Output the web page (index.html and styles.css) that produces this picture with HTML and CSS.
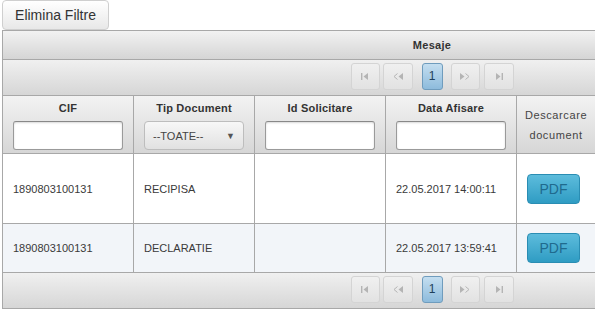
FILE: index.html
```html
<!DOCTYPE html>
<html lang="ro">
<head>
    <meta charset="UTF-8">
    <title>Mesaje</title>
    <link rel="stylesheet" href="styles.css">
</head>
<body>
    <button class="btn-clear">Elimina Filtre</button>
    <div class="panel">
        <div class="panel-header">Mesaje</div>
        <div class="pager">
            <button class="pg-btn pg-first" disabled>
                <svg width="8" height="7" viewBox="0 0 8 7"><rect x="0" y="0" width="1.4" height="7" fill="#b4b4b4"/><path d="M7 0 L2.5 3.5 L7 7 Z" fill="#b4b4b4"/></svg>
            </button>
            <button class="pg-btn pg-prev" disabled>
                <svg width="10" height="7" viewBox="0 0 10 7"><path d="M4.5 0.5 L1 3.5 L4.5 6.5" fill="none" stroke="#b4b4b4" stroke-width="1"/><path d="M10 0 L5.5 3.5 L10 7 Z" fill="#b4b4b4"/></svg>
            </button>
            <button class="pg-page">1</button>
            <button class="pg-btn pg-next" disabled>
                <svg width="10" height="7" viewBox="0 0 10 7"><path d="M0 0 L4.5 3.5 L0 7 Z" fill="#b4b4b4"/><path d="M5.5 0.5 L9 3.5 L5.5 6.5" fill="none" stroke="#b4b4b4" stroke-width="1"/></svg>
            </button>
            <button class="pg-btn pg-last" disabled>
                <svg width="8" height="7" viewBox="0 0 8 7"><path d="M1 0 L5.5 3.5 L1 7 Z" fill="#b4b4b4"/><rect x="6.6" y="0" width="1.4" height="7" fill="#b4b4b4"/></svg>
            </button>
        </div>
        <table class="grid">
            <thead>
                <tr>
                    <th class="c1"><div class="th-title">CIF</div><input class="filter" type="text"></th>
                    <th class="c2"><div class="th-title">Tip Document</div>
                        <div class="select"><span>--TOATE--</span><span class="arrow">&#9660;</span></div>
                    </th>
                    <th class="c3"><div class="th-title">Id Solicitare</div><input class="filter" type="text"></th>
                    <th class="c4"><div class="th-title">Data Afisare</div><input class="filter" type="text"></th>
                    <th class="c5 th-wrap">Descarcare document</th>
                    <th class="c6"></th>
                </tr>
            </thead>
            <tbody>
                <tr class="row-tall">
                    <td>1890803100131</td>
                    <td>RECIPISA</td>
                    <td></td>
                    <td>22.05.2017 14:00:11</td>
                    <td><button class="btn-pdf">PDF</button></td>
                    <td></td>
                </tr>
                <tr class="row-alt">
                    <td>1890803100131</td>
                    <td>DECLARATIE</td>
                    <td></td>
                    <td>22.05.2017 13:59:41</td>
                    <td><button class="btn-pdf">PDF</button></td>
                    <td></td>
                </tr>
            </tbody>
        </table>
        <div class="pager pager-bottom">
            <button class="pg-btn pg-first" disabled>
                <svg width="8" height="7" viewBox="0 0 8 7"><rect x="0" y="0" width="1.4" height="7" fill="#b4b4b4"/><path d="M7 0 L2.5 3.5 L7 7 Z" fill="#b4b4b4"/></svg>
            </button>
            <button class="pg-btn pg-prev" disabled>
                <svg width="10" height="7" viewBox="0 0 10 7"><path d="M4.5 0.5 L1 3.5 L4.5 6.5" fill="none" stroke="#b4b4b4" stroke-width="1"/><path d="M10 0 L5.5 3.5 L10 7 Z" fill="#b4b4b4"/></svg>
            </button>
            <button class="pg-page">1</button>
            <button class="pg-btn pg-next" disabled>
                <svg width="10" height="7" viewBox="0 0 10 7"><path d="M0 0 L4.5 3.5 L0 7 Z" fill="#b4b4b4"/><path d="M5.5 0.5 L9 3.5 L5.5 6.5" fill="none" stroke="#b4b4b4" stroke-width="1"/></svg>
            </button>
            <button class="pg-btn pg-last" disabled>
                <svg width="8" height="7" viewBox="0 0 8 7"><path d="M1 0 L5.5 3.5 L1 7 Z" fill="#b4b4b4"/><rect x="6.6" y="0" width="1.4" height="7" fill="#b4b4b4"/></svg>
            </button>
        </div>
    </div>
</body>
</html>
```

FILE: styles.css
```css
* {
    margin: 0;
    padding: 0;
    box-sizing: border-box;
}
body {
    font-family: 'Liberation Sans', Arial, sans-serif;
    background: #fff;
    color: #333;
    padding-left: 2px;
    overflow: hidden;
}
button {
    font-family: inherit;
}
.btn-clear {
    display: block;
    height: 30px;
    width: 107px;
    font-size: 14px;
    color: #333;
    background: linear-gradient(#ffffff, #e8e8e8);
    border: 1px solid #cfcfcf;
    border-radius: 4px;
}
.panel {
    width: 860px;
    border: 1px solid #a8a8a8;
}
.panel-header {
    height: 29px;
    line-height: 28px;
    text-align: center;
    font-size: 11px;
    font-weight: bold;
    letter-spacing: 0.3px;
    color: #333;
    background: linear-gradient(#f2f2f2, #d5d5d5);
    border-bottom: 1px solid #a8a8a8;
}
.pager {
    height: 36px;
    display: flex;
    justify-content: center;
    align-items: center;
    padding-bottom: 3px;
    background: linear-gradient(#f0f0f0, #d6d6d6);
    border-bottom: 1px solid #a8a8a8;
}
.pager-bottom {
    height: 35px;
    border-bottom: none;
}
.pg-btn {
    height: 27px;
    display: flex;
    align-items: center;
    justify-content: center;
    background: linear-gradient(#f0f0f0, #e2e2e2);
    border: 1px solid #d4d4d4;
    border-radius: 3px;
}
.pg-first { width: 29px; }
.pg-prev { width: 30px; margin-left: 3px; }
.pg-next { width: 29px; margin-left: 8px; }
.pg-last { width: 30px; margin-left: 4px; }
.pg-page {
    width: 21px;
    height: 27px;
    margin-left: 9px;
    font-size: 12px;
    color: #1e3f5c;
    background: linear-gradient(#c4def0, #8dbbdc);
    border: 1px solid #6f9cbd;
    border-radius: 3px;
}
.grid {
    width: 100%;
    table-layout: fixed;
    border-collapse: separate;
    border-spacing: 0;
}
.grid th,
.grid td {
    border-right: 1px solid #a8a8a8;
    border-bottom: 1px solid #a8a8a8;
}
.grid th {
    height: 58px;
    padding: 3px 10px 3px;
    background: linear-gradient(#f3f3f3, #d6d6d6);
    font-size: 11px;
    font-weight: bold;
    color: #333;
    vertical-align: top;
}
.c1 { width: 131px; }
.c2 { width: 121px; }
.c3 { width: 131px; }
.c4 { width: 131px; }
.c5 { width: 79px; }
.th-title {
    line-height: 18px;
    margin-bottom: 4px;
    letter-spacing: 0.2px;
}
.th-wrap {
    vertical-align: middle !important;
    line-height: 20px;
    font-weight: normal !important;
    color: #444 !important;
    letter-spacing: 0.6px;
    padding: 0 4px !important;
}
.filter {
    display: block;
    width: 100%;
    height: 29px;
    border: 1px solid #9a9a9a;
    border-top-color: #888;
    border-radius: 3px;
    background: #fff;
    box-shadow: inset 0 1px 2px rgba(0, 0, 0, 0.15);
}
.select {
    height: 29px;
    display: flex;
    justify-content: space-between;
    align-items: center;
    padding: 0 8px;
    font-size: 11px;
    font-weight: normal;
    color: #444;
    background: linear-gradient(#f7f7f7, #e1e1e1);
    border: 1px solid #bdbdbd;
    border-radius: 4px;
}
.arrow {
    font-size: 9px;
    color: #555;
}
.grid td {
    padding: 0 10px;
    font-size: 11px;
    color: #3a3a3a;
    background: #fff;
    white-space: nowrap;
}
.row-tall td {
    height: 70px;
}
.row-alt td {
    height: 49px;
    background: #f2f5f9;
}
.btn-pdf {
    display: block;
    width: 53px;
    height: 30px;
    font-size: 14px;
    color: #1f6a8e;
    background: linear-gradient(#5dbcdc, #2f9cc3);
    border: 1px solid #2a8db3;
    border-radius: 4px;
}
```
